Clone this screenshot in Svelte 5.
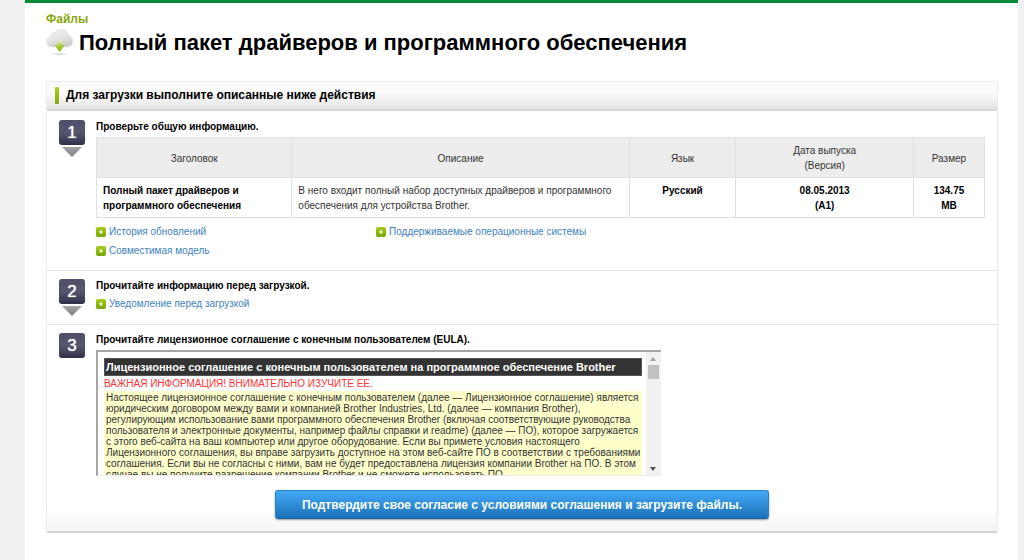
<script>
  const columns = [
    { name: "title", label: "Заголовок" },
    { name: "description", label: "Описание" },
    { name: "language", label: "Язык" },
    { name: "date", label: "Дата выпуска", sub: "(Версия)" },
    { name: "size", label: "Размер" },
  ];

  const infoLinks = [
    "История обновлений",
    "Поддерживаемые операционные системы",
    "Совместимая модель",
  ];

  let eula;

  const scrollEula = (delta) => {
    eula.scrollBy({ top: delta });
  };
</script>

{#snippet plus()}
  <svg class="plus" viewBox="0 0 10 10" aria-hidden="true">
    <rect width="10" height="10" rx="2" fill="url(#plusFill)" />
    <path d="M5 3v4M3 5h4" stroke="#f4fadc" stroke-width="1.2" />
  </svg>
{/snippet}

{#snippet badge(number, arrow)}
  <div class="badge">
    <span class="number">{number}</span>
    {#if arrow}
      <svg class="arrow" viewBox="0 0 20 10" aria-hidden="true">
        <path d="M0 0h20L10 10z" fill="url(#arrowFill)" />
      </svg>
    {/if}
  </div>
{/snippet}

<!-- Shared gradients -->
<svg class="defs" width="0" height="0" aria-hidden="true">
  <defs>
    <linearGradient id="plusFill" x1="0" y1="0" x2="0" y2="1">
      <stop offset="0" stop-color="#a9cb1e" />
      <stop offset="1" stop-color="#76a404" />
    </linearGradient>
    <linearGradient id="arrowFill" x1="0" y1="0" x2="0" y2="1">
      <stop offset="0" stop-color="#a6a6a6" />
      <stop offset="1" stop-color="#7c7c7c" />
    </linearGradient>
  </defs>
</svg>

<main class="page">
  <header>
    <p class="category">Файлы</p>
    <div class="heading">
      <svg class="cloud" viewBox="0 0 27 27" aria-hidden="true">
        <defs>
          <linearGradient id="cloudFill" x1="0" y1="0" x2="0.5" y2="1">
            <stop offset="0" stop-color="#ececec" />
            <stop offset="0.5" stop-color="#e8e8e8" />
            <stop offset="1" stop-color="#cecece" />
          </linearGradient>
          <linearGradient id="cloudArrow" x1="0" y1="0" x2="0" y2="1">
            <stop offset="0" stop-color="#f0f4d8" />
            <stop offset="0.5" stop-color="#a8cc38" />
            <stop offset="1" stop-color="#8cb414" />
          </linearGradient>
          <radialGradient id="cloudShadow">
            <stop offset="0" stop-color="#cfcfcf" />
            <stop offset="1" stop-color="#cfcfcf" stop-opacity="0" />
          </radialGradient>
        </defs>
        <ellipse cx="13.5" cy="25.2" rx="10" ry="1.6" fill="url(#cloudShadow)" />
        <path
          d="M6 18C2.500 18 0.500 15.400 0.500 12.600C0.500 9.800 2.300 7.800 4.800 7.200C4.800 4.900 6.600 3.300 9 3.500C10 1.500 12.200 0.500 15 0.500C19.400 0.500 22.200 3 22.400 6.600C25 7.200 26.600 9.400 26.600 12.200C26.600 15.600 24.400 18 21 18Z"
          fill="url(#cloudFill)"
          stroke="#d8d8d8"
          stroke-width="0.5"
        />
        <path
          d="M12 11h3.500v4.500h3.700l-5.500 7.500l-5.500-7.500H12z"
          fill="url(#cloudArrow)"
        />
      </svg>
      <h1>Полный пакет драйверов и программного обеспечения</h1>
    </div>
  </header>

  <section class="panel">
    <h2>Для загрузки выполните описанные ниже действия</h2>

    <!-- 1 -->
    <div class="step">
      {@render badge(1, true)}
      <div class="content">
        <h3>Проверьте общую информацию.</h3>
        <table>
          <thead>
            <tr>
              {#each columns as column}
                <th class={column.name} scope="col">
                  {column.label}
                  {#if column.sub}<br />{column.sub}{/if}
                </th>
              {/each}
            </tr>
          </thead>
          <tbody>
            <tr>
              <td class="strong">Полный пакет драйверов и программного обеспечения</td>
              <td>
                В него входит полный набор доступных драйверов и программного
                обеспечения для устройства Brother.
              </td>
              <td class="strong center">Русский</td>
              <td class="strong center">08.05.2013<br />(A1)</td>
              <td class="strong center">134.75<br />MB</td>
            </tr>
          </tbody>
        </table>
        <ul class="links">
          {#each infoLinks as link}
            <li><a href="#info">{@render plus()}{link}</a></li>
          {/each}
        </ul>
      </div>
    </div>

    <!-- 2 -->
    <div class="step">
      {@render badge(2, true)}
      <div class="content">
        <h3>Прочитайте информацию перед загрузкой.</h3>
        <ul class="links">
          <li><a href="#notice">{@render plus()}Уведомление перед загрузкой</a></li>
        </ul>
      </div>
    </div>

    <!-- 3 -->
    <div class="step last">
      {@render badge(3, false)}
      <div class="content">
        <h3>Прочитайте лицензионное соглашение с конечным пользователем (EULA).</h3>
        <div class="eula">
          <div class="eula-text" bind:this={eula}>
            <h4>Лицензионное соглашение с конечным пользователем на программное обеспечение Brother</h4>
            <p class="warning">ВАЖНАЯ ИНФОРМАЦИЯ! ВНИМАТЕЛЬНО ИЗУЧИТЕ ЕЕ.</p>
            <p class="terms">
              Настоящее лицензионное соглашение с конечным пользователем (далее — Лицензионное соглашение) является
              юридическим договором между вами и компанией Brother Industries, Ltd. (далее — компания Brother),
              регулирующим использование вами программного обеспечения Brother (включая соответствующие руководства
              пользователя и электронные документы, например файлы справки и readme) (далее — ПО), которое загружается
              с этого веб-сайта на ваш компьютер или другое оборудование. Если вы примете условия настоящего
              Лицензионного соглашения, вы вправе загрузить доступное на этом веб-сайте ПО в соответствии с требованиями
              соглашения. Если вы не согласны с ними, вам не будет предоставлена лицензия компании Brother на ПО. В этом
              случае вы не получите разрешение компании Brother и не сможете использовать ПО.
            </p>
          </div>
          <div class="scrollbar">
            <button class="scroll-up" aria-label="Вверх" onclick={() => scrollEula(-22)}>
              <svg viewBox="0 0 6 4"><path d="M0 4L3 0l3 4z" fill="#a3a3a3" /></svg>
            </button>
            <span class="thumb"></span>
            <button class="scroll-down" aria-label="Вниз" onclick={() => scrollEula(22)}>
              <svg viewBox="0 0 6 4"><path d="M0 0l3 4L6 0z" fill="#505050" /></svg>
            </button>
          </div>
        </div>
      </div>
    </div>

    <div class="actions">
      <button class="submit">Подтвердите свое согласие с условиями соглашения и загрузите файлы.</button>
    </div>
  </section>
</main>

<style>
  :global(body) {
    background: #f1f1f1;
    font-family: "Liberation Sans", Arial, sans-serif;
    font-size: 10px;
    line-height: 15px;
    color: #333;
  }

  h1,
  h2,
  h3,
  h4,
  p,
  ul {
    margin: 0;
    padding: 0;
  }

  .defs {
    position: absolute;
  }

  .page {
    box-sizing: border-box;
    min-height: 100vh;
    margin: 0 6px 0 25px;
    padding: 9px 20px 27px 21px;
    border-top: 3px solid #008a38;
    background: #fff;
  }

  .category {
    font-size: 12px;
    font-weight: bold;
    color: #86a80f;
  }

  .heading {
    display: flex;
    align-items: center;
    gap: 6px;
    height: 31px;
  }
  .cloud {
    width: 27px;
    height: 27px;
  }
  h1 {
    font-size: 22px;
    line-height: 28px;
    color: #000;
  }

  .panel {
    margin-top: 23px;
    border: 1px solid #ebebeb;
    border-bottom: 2px solid #d4d4d4;
    border-radius: 3px;
  }
  h2 {
    display: flex;
    align-items: center;
    gap: 7px;
    height: 27px;
    padding-left: 8px;
    border-bottom: 2px solid #d9d9d9;
    background: linear-gradient(#fbfbfb 40%, #e4e4e4);
    font-size: 12px;
    color: #000;
  }
  h2::before {
    content: "";
    width: 4px;
    height: 17px;
    border-radius: 1px;
    background: linear-gradient(#b0d01c, #7ca808);
  }

  .step {
    display: flex;
    gap: 11px;
    padding: 8px 12px;
    border-bottom: 1px solid #e4e4e4;
  }
  .step + .step {
    padding-top: 7px;
  }
  .step.last {
    padding-bottom: 0;
    border-bottom: 0;
  }
  .badge {
    display: flex;
    flex-direction: column;
    align-items: center;
    gap: 2px;
    flex: none;
    width: 26px;
    margin-top: 1px;
  }
  .number {
    width: 26px;
    height: 25px;
    border-radius: 3px;
    background: linear-gradient(#4e4e68, #56566e 50%, #30304c);
    font-size: 17px;
    line-height: 25px;
    text-align: center;
    text-shadow: 0 0 1px #fff;
    color: #fff;
  }
  .arrow {
    width: 20px;
    height: 10px;
  }
  .content {
    flex: 1;
    min-width: 0;
  }
  h3 {
    font-size: 10px;
    color: #000;
  }

  table {
    width: 100%;
    margin: 3px 0 6px;
    border-collapse: collapse;
    table-layout: fixed;
  }
  th,
  td {
    box-sizing: border-box;
    padding: 5px 6px 4px;
    border: 1px solid #e0e0e0;
    text-align: left;
    vertical-align: top;
  }
  th {
    background: #ededed;
    font-weight: normal;
    text-align: center;
    vertical-align: middle;
  }
  .title {
    width: 22%;
  }
  .description {
    width: 38%;
  }
  .language {
    width: 12%;
  }
  .date {
    width: 20%;
  }
  .size {
    width: 8%;
  }
  .strong {
    font-weight: bold;
    color: #000;
  }
  .center {
    text-align: center;
  }

  .links {
    display: grid;
    grid-template-columns: repeat(2, 1fr);
    gap: 4px 0;
    width: 63%;
    margin: 3px 0 4px;
    list-style: none;
  }
  .links a {
    display: flex;
    align-items: center;
    gap: 3px;
    white-space: nowrap;
    color: #3f82c2;
    text-decoration: none;
  }
  .plus {
    width: 10px;
    height: 10px;
  }

  .eula {
    display: flex;
    box-sizing: border-box;
    width: 63.5%;
    height: 126px;
    margin-top: 3px;
    border: 2px solid #a6a6a6;
    border-right: 0;
    border-bottom: 1px solid #ececec;
  }
  .eula-text {
    flex: 1;
    min-width: 0;
    padding: 6px 4px 0 6px;
    overflow-y: scroll;
    scrollbar-width: none;
  }
  h4 {
    padding: 0 1px;
    border: 1px solid #555;
    background: #333;
    font-size: 11px;
    line-height: 16px;
    white-space: nowrap;
    color: #fff;
  }
  .warning {
    line-height: 15px;
    color: #f33;
  }
  .terms {
    padding: 1px 0 8px 2px;
    background: #ffffcb;
    line-height: 11px;
  }
  .scrollbar {
    display: flex;
    flex-direction: column;
    align-items: center;
    width: 15px;
    background: #f1f1f1;
  }
  .scrollbar button {
    display: flex;
    align-items: center;
    justify-content: center;
    width: 100%;
    height: 13px;
    padding: 0;
    border: 0;
    background: none;
  }
  .scrollbar svg {
    width: 6px;
    height: 4px;
  }
  .thumb {
    width: 11px;
    height: 14px;
    background: #c1c1c1;
  }
  .scrollbar .scroll-down {
    margin-top: auto;
  }

  .actions {
    display: flex;
    justify-content: center;
    padding: 14px 0 12px;
    background: linear-gradient(#fff 60%, #f5f5f5);
  }
  .submit {
    width: 52%;
    height: 29px;
    padding: 0;
    border: 1px solid #2b7fc4;
    border-bottom-color: #1a67a8;
    border-radius: 3px;
    background: linear-gradient(#44a9f8, #1b72b8);
    box-shadow: 0 1px 2px rgba(0, 0, 0, 0.4);
    font: bold 12px "Liberation Sans", Arial, sans-serif;
    color: #fff;
    cursor: pointer;
  }
</style>
